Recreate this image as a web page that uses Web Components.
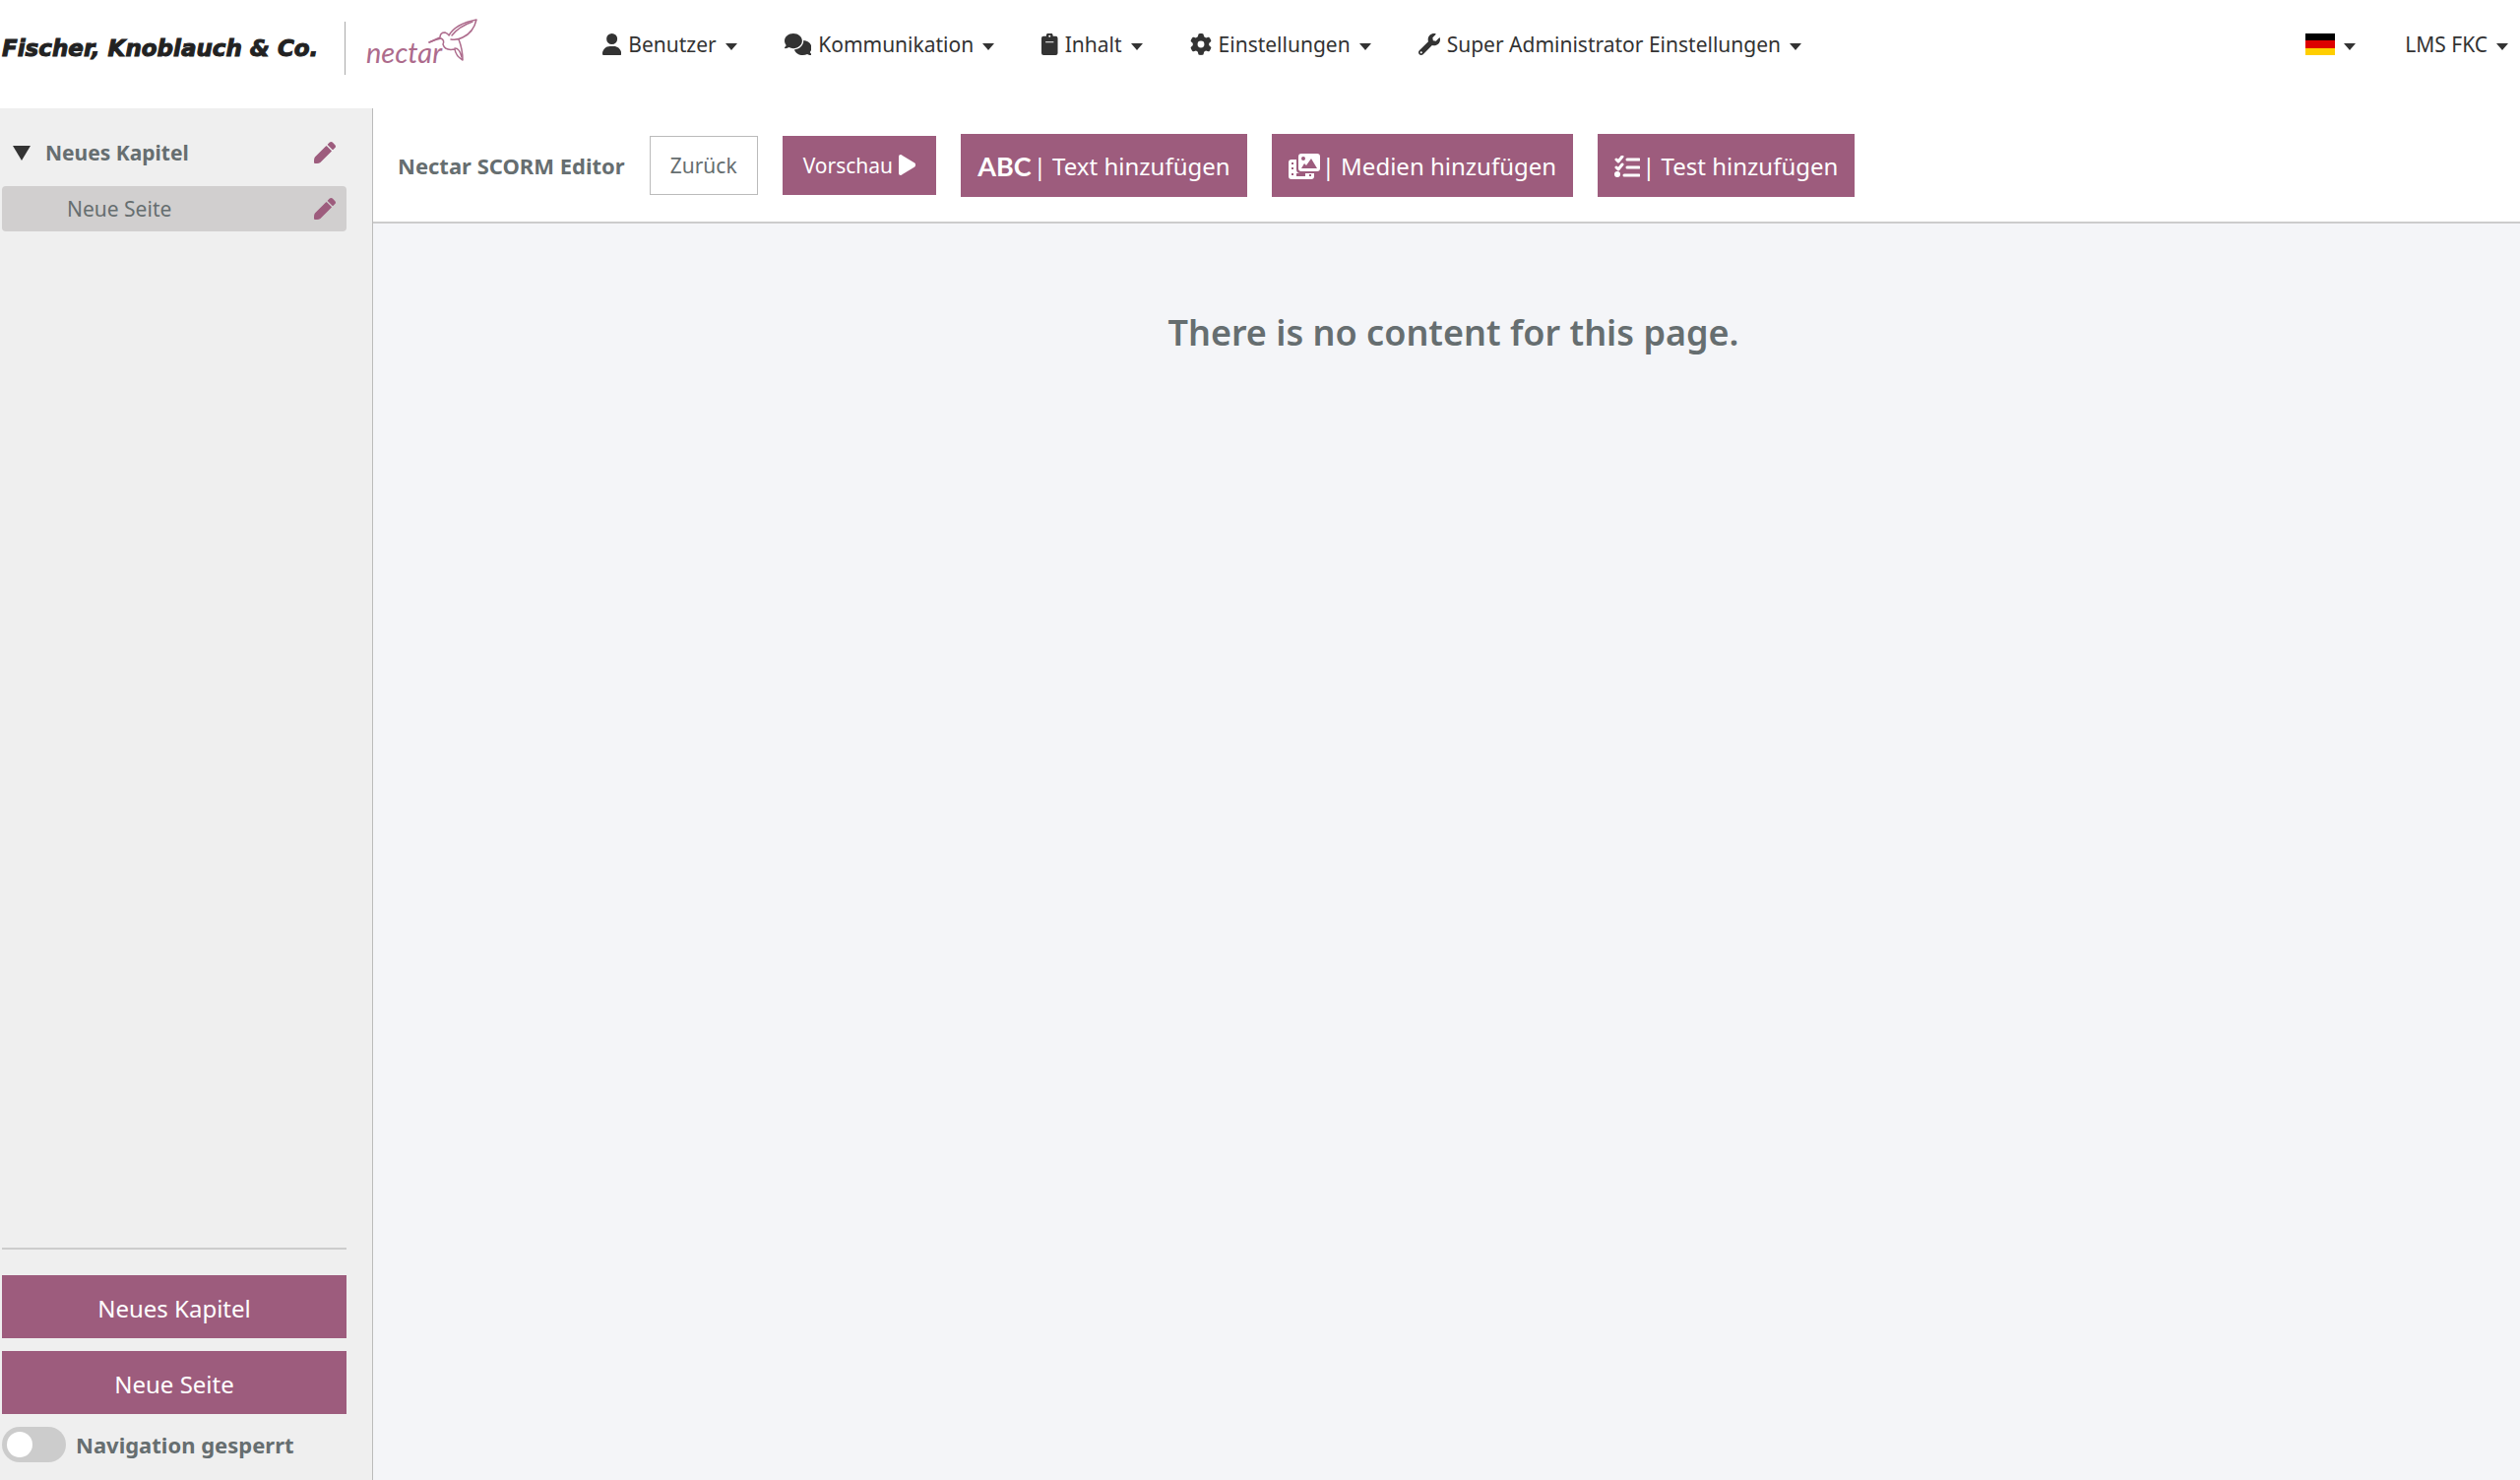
<!DOCTYPE html>
<html lang="de">
<head>
<meta charset="utf-8">
<title>Nectar SCORM Editor</title>
<style>
body {
    margin: 0;
    font-family: "Noto Sans", "Open Sans", sans-serif;
    font-size: 21px;
    color: #666e70;
    --accent: #9d5c7d;
    --line: #cccccc;
    --dark: #333333;
}
</style>
</head>
<body>
<scorm-app></scorm-app>

<script>
const ICONS = {
    user: ['0 0 448 512', '<path d="M224 256A128 128 0 1 0 224 0a128 128 0 1 0 0 256zm-45.700 48C79.800 304 0 383.800 0 482.300C0 498.700 13.300 512 29.700 512l388.600 0c16.400 0 29.700-13.300 29.700-29.700C448 383.800 368.200 304 269.700 304l-91.400 0z"/>'],
    comments: ['0 0 640 512', '<path d="M208 352c114.900 0 208-78.800 208-176S322.900 0 208 0S0 78.800 0 176c0 38.600 14.700 74.300 39.600 103.400c-3.500 9.400-8.700 17.700-14.200 24.700c-4.800 6.200-9.700 11-13.300 14.300c-1.800 1.600-3.300 2.900-4.300 3.700l-1.300 1C1 327.200-1.400 334.400.8 340.900S9.100 352 16 352c21.800 0 43.800-5.600 62.100-12.500c9.200-3.500 17.800-7.400 25.200-11.400C134.100 343.300 169.800 352 208 352zM448 176c0 112.300-99.100 196.900-216.500 207C255.800 457.400 336.400 512 432 512c38.200 0 73.900-8.700 104.700-23.900c7.500 4 16 7.900 25.200 11.400c18.300 6.900 40.300 12.500 62.100 12.500c6.900 0 13.100-4.500 15.200-11.100c2.100-6.600-.2-13.800-5.800-17.900l-1.300-1c-1-.8-2.500-2-4.300-3.700c-3.600-3.300-8.500-8.100-13.300-14.300c-5.500-7-10.700-15.400-14.200-24.700c24.900-29 39.600-64.700 39.600-103.400c0-92.800-84.900-168.900-192.600-175.500c.4 5.100.6 10.300.6 15.500z"/>'],
    clipboard: ['0 0 384 512', '<path fill-rule="evenodd" d="M48 64h64a80 80 0 0 1 160 0h64a48 48 0 0 1 48 48v352a48 48 0 0 1-48 48H48a48 48 0 0 1-48-48V112a48 48 0 0 1 48-48zM192 40a24 24 0 1 0 0 48 24 24 0 1 0 0-48zM96 192v24h192v-24z"/>'],
    gear: ['0 0 512 512', '<path d="M495.900 166.600c3.200 8.700.5 18.400-6.400 24.600l-43.300 39.400c1.100 8.300 1.700 16.800 1.700 25.400s-.6 17.100-1.700 25.400l43.300 39.400c6.900 6.200 9.600 15.900 6.400 24.600c-4.400 11.900-9.700 23.300-15.800 34.300l-4.700 8.100c-6.600 11-14 21.400-22.100 31.200c-5.900 7.200-15.700 9.600-24.500 6.800l-55.700-17.700c-13.400 10.300-28.200 18.900-44 25.400l-12.500 57.100c-2 9.100-9 16.300-18.200 17.800c-13.800 2.300-28 3.500-42.500 3.500s-28.700-1.200-42.500-3.500c-9.200-1.500-16.200-8.700-18.200-17.800l-12.500-57.100c-15.800-6.500-30.600-15.100-44-25.400L83.100 425.900c-8.800 2.800-18.600.3-24.500-6.800c-8.100-9.800-15.500-20.200-22.100-31.200l-4.700-8.100c-6.100-11-11.400-22.400-15.800-34.300c-3.200-8.700-.5-18.400 6.400-24.600l43.300-39.400C64.600 273.100 64 264.600 64 256s.6-17.100 1.700-25.400L22.400 191.200c-6.900-6.200-9.600-15.900-6.400-24.600c4.400-11.900 9.700-23.300 15.800-34.300l4.700-8.100c6.600-11 14-21.400 22.100-31.200c5.900-7.200 15.700-9.600 24.500-6.800l55.700 17.700c13.400-10.300 28.200-18.900 44-25.400l12.500-57.100c2-9.100 9-16.300 18.200-17.800C227.300 1.200 241.500 0 256 0s28.700 1.200 42.500 3.500c9.200 1.500 16.200 8.700 18.200 17.800l12.500 57.100c15.800 6.500 30.600 15.100 44 25.400l55.700-17.700c8.800-2.800 18.600-.3 24.500 6.800c8.100 9.800 15.500 20.200 22.100 31.200l4.700 8.100c6.100 11 11.400 22.400 15.800 34.300zM256 336a80 80 0 1 0 0-160 80 80 0 1 0 0 160z"/>'],
    wrench: ['0 0 512 512', '<path d="M507.730 109.100c-2.240-9.030-13.540-12.090-20.120-5.510l-74.360 74.360-67.880-11.310-11.310-67.880 74.360-74.360c6.620-6.620 3.430-17.900-5.660-20.160-47.380-11.740-99.550.91-136.580 37.930-39.640 39.640-50.550 97.100-34.050 147.200L18.740 402.760c-24.990 24.990-24.990 65.510 0 90.500 24.990 24.990 65.510 24.990 90.500 0l213.210-213.210c50.120 16.710 107.470 5.680 147.370-34.220 37.070-37.070 49.700-89.320 37.910-136.730zM64 472c-13.250 0-24-10.750-24-24 0-13.260 10.750-24 24-24s24 10.740 24 24c0 13.250-10.750 24-24 24z"/>'],
    pencil: ['0 0 512 512', '<path d="M497.900 142.100l-46.100 46.100c-4.700 4.700-12.300 4.700-17 0l-111-111c-4.700-4.700-4.700-12.300 0-17l46.100-46.100c18.700-18.700 49.100-18.700 67.900 0l60.100 60.100c18.800 18.700 18.800 49.100 0 67.900zM284.200 99.800L21.600 362.400Q0 390 0 440V490Q0 512 24 512H70Q120 512 149.700 490.400l262.600-262.600c4.700-4.700 4.700-12.300 0-17l-111-111c-4.800-4.700-12.400-4.700-17.100 0z"/>'],
    play: ['0 0 18 22', '<path d="M2 0Q3 0 4 1L17 9Q19 11 17 13L4 21Q3 22 2 22Q0 22 0 20V2Q0 0 2 0z"/>'],
    media: ['0 0 32 26', '<path fill-rule="evenodd" d="M13 0h16a3 3 0 0 1 3 3v12a3 3 0 0 1-3 3H13a3 3 0 0 1-3-3V3a3 3 0 0 1 3-3zM15 3a2 2 0 1 0 0 4 2 2 0 1 0 0-4zM13 15h16L23 5l-5 7-2-2z"/><path fill-rule="evenodd" d="M3 6h5v10q0 4 4 4h14v3a3 3 0 0 1-3 3H3a3 3 0 0 1-3-3V9q0-3 3-3zM3 9v2h2V9zM3 14v2h2v-2zM3 20v2h2v-2zM8 20v3h9v-3zM21 21v2h2v-2z"/>'],
    tasks: ['0 0 26 22', '<g fill="none" stroke="currentColor" stroke-width="3" stroke-linecap="round" stroke-linejoin="round"><path d="M2 4l2 2 4-5M2 12l2 2 4-5M13 4h12M13 12h12M10 20h15"/></g><circle cx="3" cy="19" r="3"/>'],
    caret: ['0 0 12 7', '<path d="M0 0h12L6 7z"/>'],
    triangle: ['0 0 18 15', '<path d="M0 0h18L9 15z"/>'],
    flag: ['0 0 30 22', '<path fill="#000" d="M0 0h30v8H0z"/><path fill="#d00" d="M0 7h30v8H0z"/><path fill="#ffce00" d="M0 15h30v7H0z"/>'],
    bird: ['0 0 50 44', '<g fill="none" stroke="currentColor" stroke-width="1.500" stroke-linejoin="round" stroke-linecap="round"><path d="M1 24L12 19Q12 14 17 14Q20 15 21 17Q28 5 49 1Q46 14 35 19Q30 22 23 21"/><path d="M1 24Q8 21 13 20Q17 22 15 26Q17 33 27 31Q28 38 35 42Q35 31 31 21"/><path d="M27 30Q32 30 34 39M24 17Q31 8 45 3"/></g>'],
};

class AppIcon extends HTMLElement {
    constructor() {
        super();
        this.attachShadow({ mode: "open" });
    }

    connectedCallback() {
        const [box, shapes] = ICONS[this.getAttribute('name')];
        this.shadowRoot.innerHTML = `
<style>
:host { display: inline-flex; flex: none; height: 22px; }
svg { display: block; height: 100%; fill: currentColor; }
</style>
<svg viewBox="${box}" aria-hidden="true">${shapes}</svg>`;
    }
}
customElements.define('app-icon', AppIcon);

// Petite base commune : clone un template dans le shadow root
function define(name, html) {
    const template = document.createElement("template");
    template.innerHTML = html;
    customElements.define(name, class extends HTMLElement {
        constructor() {
            super();
            this.attachShadow({ mode: "open" }).appendChild(template.content.cloneNode(true));
        }
    });
}

define('nav-item', `
<style>
:host { display: block; flex: none; }
button {
    display: flex;
    align-items: center;
    gap: 7px;
    height: 32px;
    padding: 0;
    border: 0;
    background: none;
    font: inherit;
    line-height: 32px;
    color: var(--dark);
    cursor: pointer;
}
.caret { height: 7px; margin-left: 2px; margin-top: 4px; }
</style>
<button type="button" aria-haspopup="true">
    <slot name="icon"></slot>
    <slot></slot>
    <app-icon class="caret" name="caret"></app-icon>
</button>
`);

define('brand-logo', `
<style>
:host { display: flex; align-items: center; flex: none; width: 612px; height: 60px; }
.company {
    width: 351px;
    box-sizing: border-box;
    padding-left: 2px;
    border-right: 1px solid #aaa;
    font: italic bold 23px/54px "DejaVu Sans", sans-serif;
    color: #222;
    -webkit-text-stroke: 1px #222;
    white-space: nowrap;
}
.product {
    display: flex;
    align-items: flex-start;
    height: 60px;
    padding-left: 21px;
    font: italic 29px/36px Lato, sans-serif;
    color: #ad6b8c;
}
.product span { padding-top: 16px; }
.product app-icon { height: 44px; margin-left: -14px; }
</style>
<div class="company">Fischer, Knoblauch &amp; Co.</div>
<div class="product"><span>nectar</span><app-icon name="bird"></app-icon></div>
`);

define('top-bar', `
<style>
:host { display: block; background: #fff; }
header {
    display: flex;
    align-items: flex-start;
    height: 110px;
    box-sizing: border-box;
    padding: 19px 12px 0 0;
}
nav { display: flex; gap: 48px; padding-top: 10px; }
.account { margin-left: auto; gap: 50px; }
</style>
<header>
    <brand-logo></brand-logo>
    <nav>
        <nav-item><app-icon slot="icon" name="user"></app-icon>Benutzer</nav-item>
        <nav-item><app-icon slot="icon" name="comments"></app-icon>Kommunikation</nav-item>
        <nav-item><app-icon slot="icon" name="clipboard"></app-icon>Inhalt</nav-item>
        <nav-item><app-icon slot="icon" name="gear"></app-icon>Einstellungen</nav-item>
        <nav-item><app-icon slot="icon" name="wrench"></app-icon>Super Administrator Einstellungen</nav-item>
    </nav>
    <nav class="account">
        <nav-item aria-label="Sprache"><app-icon slot="icon" name="flag"></app-icon></nav-item>
        <nav-item>LMS FKC</nav-item>
    </nav>
</header>
`);

define('action-button', `
<style>
:host { display: block; flex: none; }
button {
    display: flex;
    align-items: center;
    justify-content: center;
    gap: 6px;
    width: 100%;
    height: 60px;
    padding: 0 20px;
    border: 1px solid var(--accent);
    background: var(--accent);
    color: #fff;
    font: inherit;
    white-space: nowrap;
    cursor: pointer;
}
:host([plain]) button { background: #fff; border-color: #bbb; color: inherit; }
:host([large]) button { height: 64px; padding: 2px 16px 0; gap: 2px; font-size: 24px; }
</style>
<button type="button"><slot></slot></button>
`);

define('nav-row', `
<style>
:host {
    display: flex;
    align-items: center;
    height: 46px;
    padding: 0 11px;
    border-radius: 4px;
}
:host([chapter]) { font-weight: bold; }
:host([selected]) { background: #d1cfcf; }
.title { flex: 1; padding-left: 55px; }
:host([chapter]) .title { padding-left: 15px; }
.title ::slotted(a) { color: inherit; text-decoration: none; }
button { display: flex; padding: 0; border: 0; background: none; color: var(--accent); cursor: pointer; }
</style>
<slot name="marker"></slot>
<div class="title"><slot></slot></div>
<button type="button" aria-label="Bearbeiten"><app-icon name="pencil"></app-icon></button>
`);

define('toggle-switch', `
<style>
:host { display: block; }
label { display: flex; align-items: center; gap: 10px; font-size: 22px; line-height: 36px; font-weight: bold; cursor: pointer; }
input {
    appearance: none;
    width: 65px;
    height: 36px;
    margin: 0;
    padding: 5px;
    box-sizing: border-box;
    border-radius: 18px;
    background: var(--line);
}
input::before {
    content: "";
    display: block;
    width: 26px;
    height: 26px;
    border-radius: 50%;
    background: #fff;
}
input:checked { background: var(--accent); }
input:checked::before { margin-left: auto; }
</style>
<label><input type="checkbox"><span><slot></slot></span></label>
`);

define('side-bar', `
<style>
:host {
    display: flex;
    flex-direction: column;
    width: 379px;
    box-sizing: border-box;
    padding: 22px 26px 18px 2px;
    background: #efefef;
    border-right: 1px solid #bbb;
}
.tree { flex: 1; display: flex; flex-direction: column; gap: 11px; }
.marker { height: 15px; color: var(--dark); }
.actions {
    display: flex;
    flex-direction: column;
    gap: 13px;
    padding-top: 26px;
    border-top: 2px solid var(--line);
}
</style>
<div class="tree">
    <nav-row chapter><app-icon class="marker" slot="marker" name="triangle"></app-icon><a href="#kapitel">Neues Kapitel</a></nav-row>
    <nav-row selected><a href="#seite">Neue Seite</a></nav-row>
</div>
<div class="actions">
    <action-button large>Neues Kapitel</action-button>
    <action-button large>Neue Seite</action-button>
    <toggle-switch>Navigation gesperrt</toggle-switch>
</div>
`);

define('editor-toolbar', `
<style>
:host {
    display: flex;
    align-items: center;
    gap: 25px;
    height: 115px;
    padding-left: 25px;
    background: #fff;
    border-bottom: 2px solid var(--line);
}
h1 { margin: 0; font-size: 22px; font-weight: bold; }
.play { height: 21px; }
.media { height: 26px; }
.abc { font: bold 27px/30px Lato, sans-serif; }
</style>
<h1>Nectar SCORM Editor</h1>
<action-button plain>Zurück</action-button>
<action-button>Vorschau<app-icon class="play" name="play"></app-icon></action-button>
<action-button large><span class="abc">ABC</span><span>| Text hinzufügen</span></action-button>
<action-button large><app-icon class="media" name="media"></app-icon><span>| Medien hinzufügen</span></action-button>
<action-button large><app-icon name="tasks"></app-icon><span>| Test hinzufügen</span></action-button>
`);

define('page-content', `
<style>
:host { display: block; flex: 1; background: #f4f5f8; }
h2 {
    margin: 0;
    padding: 84px 0 0 14px;
    font-size: 36px;
    line-height: 54px;
    font-weight: 600;
    text-align: center;
}
</style>
<h2><slot></slot></h2>
`);

define('scorm-app', `
<style>
:host { display: flex; flex-direction: column; min-height: 100vh; }
.body { flex: 1; display: flex; }
main { flex: 1; display: flex; flex-direction: column; }
</style>
<top-bar></top-bar>
<div class="body">
    <side-bar></side-bar>
    <main>
        <editor-toolbar></editor-toolbar>
        <page-content>There is no content for this page.</page-content>
    </main>
</div>
`);
</script>
</body>
</html>
